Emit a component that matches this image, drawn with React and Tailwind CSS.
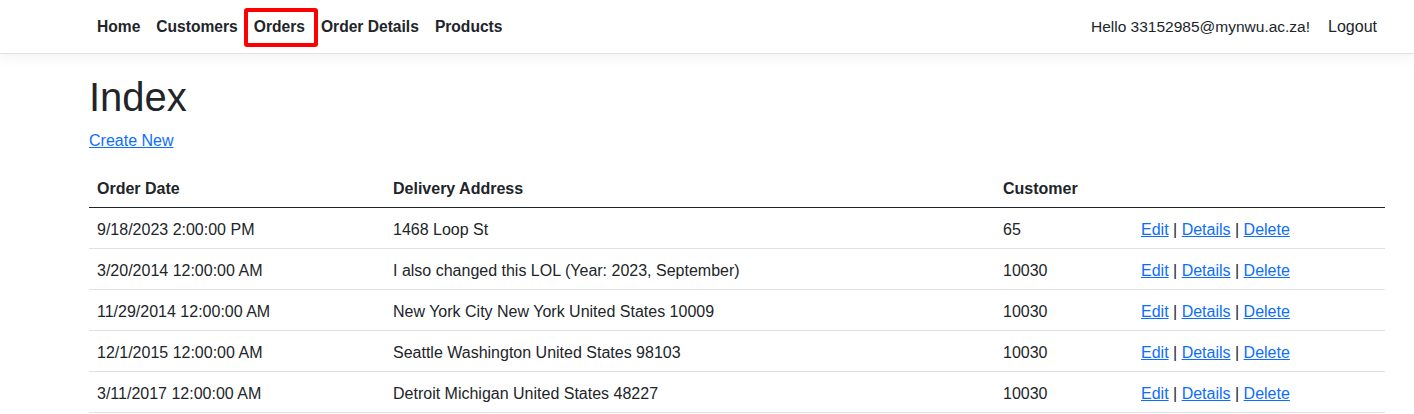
const orders = [
  { date: '9/18/2023 2:00:00 PM', address: '1468 Loop St', customer: '65' },
  { date: '3/20/2014 12:00:00 AM', address: 'I also changed this LOL (Year: 2023, September)', customer: '10030' },
  { date: '11/29/2014 12:00:00 AM', address: 'New York City New York United States 10009', customer: '10030' },
  { date: '12/1/2015 12:00:00 AM', address: 'Seattle Washington United States 98103', customer: '10030' },
  { date: '3/11/2017 12:00:00 AM', address: 'Detroit Michigan United States 48227', customer: '10030' },
];

const navItems = ['Home', 'Customers', 'Orders', 'Order Details', 'Products'];

export default function App() {
  return (
    <div className="min-h-screen bg-white text-[#212529] text-[16px] leading-6" style={{ fontFamily: '"Liberation Sans", Arial, sans-serif' }}>
      {/* Navbar */}
      <nav className="h-[54px] border-b border-[#dee2e6] bg-white shadow-[0_4px_12px_rgba(0,0,0,0.05)]">
        <div className="ml-[89px] w-[1296px] h-full flex items-center justify-between">
          <ul className="flex items-center">
            {navItems.map((item) => (
              <li key={item} className="relative">
                <a href="#" className="block px-2 py-2 font-bold text-[15.6px] text-[#212529]">{item}</a>
                {item === 'Orders' && (
                  <span className="absolute -left-[2px] -right-[5px] top-[1px] bottom-0 border-4 border-[#ff0000] rounded-[3px] pointer-events-none" />
                )}
              </li>
            ))}
          </ul>
          <ul className="flex items-center">
            <li><span className="block px-2 py-2 text-[15.5px]">Hello 33152985@mynwu.ac.za!</span></li>
            <li><a href="#" className="block px-2 py-2 ml-[2px] text-[16px] text-[#212529]">Logout</a></li>
          </ul>
        </div>
      </nav>

      {/* Main */}
      <main className="ml-[89px] w-[1296px] pt-[19px]">
        <h1 className="text-[40px] leading-[48px] font-normal mb-[8px]">Index</h1>
        <p className="mb-[14px]">
          <a href="#" className="text-[#0d6efd] underline">Create New</a>
        </p>
        <table className="w-full border-collapse text-left">
          <thead>
            <tr className="border-b-[1.5px] border-[#212529]">
              <th className="w-[296px] px-2 pt-[10px] pb-[6px] font-bold">Order Date</th>
              <th className="w-[610px] px-2 pt-[10px] pb-[6px] font-bold">Delivery Address</th>
              <th className="w-[138px] px-2 pt-[10px] pb-[6px] font-bold">Customer</th>
              <th className="px-2 pt-[10px] pb-[6px]"></th>
            </tr>
          </thead>
          <tbody>
            {orders.map((o, i) => (
              <tr key={i} className="border-b border-[#dee2e6]">
                <td className="px-2 pt-[10px] pb-[6px]">{o.date}</td>
                <td className="px-2 pt-[10px] pb-[6px]">{o.address}</td>
                <td className="px-2 pt-[10px] pb-[6px]">{o.customer}</td>
                <td className="px-2 pt-[10px] pb-[6px]">
                  <a href="#" className="text-[#0d6efd] underline">Edit</a> |{' '}
                  <a href="#" className="text-[#0d6efd] underline">Details</a> |{' '}
                  <a href="#" className="text-[#0d6efd] underline">Delete</a>
                </td>
              </tr>
            ))}
          </tbody>
        </table>
      </main>
    </div>
  );
}
